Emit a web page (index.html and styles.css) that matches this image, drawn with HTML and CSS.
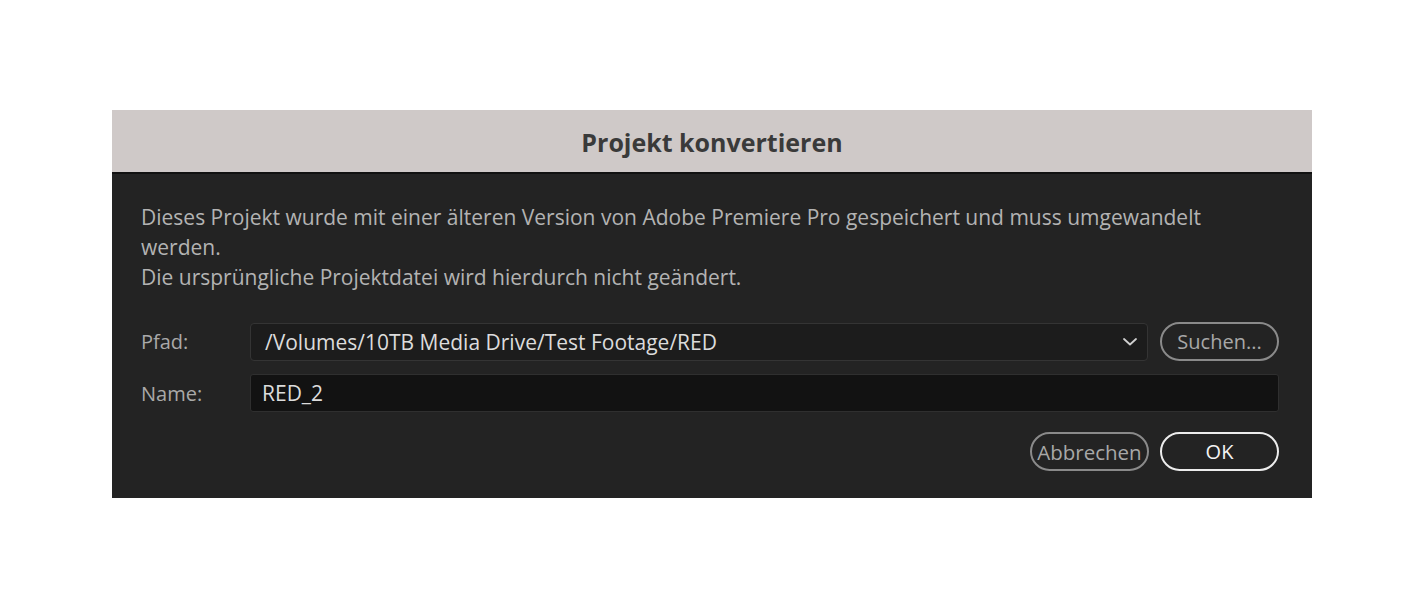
FILE: index.html
```html
<!DOCTYPE html>
<html lang="de">
<head>
<meta charset="utf-8">
<title>Projekt konvertieren</title>
<link rel="stylesheet" href="styles.css">
</head>
<body>
<div class="dialog">
  <div class="titlebar">Projekt konvertieren</div>
  <div class="content">
    <p class="message">Dieses Projekt wurde mit einer älteren Version von Adobe Premiere Pro gespeichert und muss umgewandelt werden.<br>Die ursprüngliche Projektdatei wird hierdurch nicht geändert.</p>
    <div class="form">
      <div class="row">
        <label class="label">Pfad:</label>
        <div class="select">
          <span class="select-text">/Volumes/10TB Media Drive/Test Footage/RED</span>
          <svg class="chevron" width="14" height="8" viewBox="0 0 14 8"><path d="M1 1 L7 6.5 L13 1" fill="none" stroke="#d0d0d0" stroke-width="1.8" stroke-linecap="round" stroke-linejoin="round"/></svg>
        </div>
        <button class="btn btn-secondary">Suchen...</button>
      </div>
      <div class="row">
        <label class="label">Name:</label>
        <div class="input">RED_2</div>
      </div>
    </div>
    <div class="actions">
      <button class="btn btn-secondary btn-wide">Abbrechen</button>
      <button class="btn btn-primary">OK</button>
    </div>
  </div>
</div>
</body>
</html>
```
FILE: styles.css
```css
* { box-sizing: border-box; }
html, body { margin: 0; background: #ffffff; }
body {
  padding: 110px 0 0 112px;
  font-family: "Open Sans", "Noto Sans", sans-serif;
}
.dialog {
  width: 1200px;
  background: #232323;
}
.titlebar {
  height: 64px;
  background: #cfc9c8;
  border-bottom: 2px solid #111111;
  display: flex;
  align-items: center;
  justify-content: center;
  font-weight: 700;
  font-size: 25px;
  color: #3a3a3a;
  padding-top: 2px;
}
.content {
  padding: 28px 33px 27px 29px;
}
.message {
  margin: 0;
  width: 1100px;
  font-size: 21px;
  line-height: 30px;
  color: #b3b3b3;
}
.form {
  margin-top: 30px;
  display: flex;
  flex-direction: column;
  gap: 13px;
}
.row {
  display: flex;
  align-items: center;
  gap: 12px;
}
.label {
  width: 97px;
  font-size: 20px;
  color: #a9a9a9;
}
.select {
  flex: 1;
  height: 38px;
  background: #1c1c1c;
  border: 1px solid #343434;
  border-radius: 4px;
  display: flex;
  align-items: center;
  justify-content: space-between;
  padding: 0 10px 0 14px;
}
.select-text, .input {
  font-size: 21px;
  color: #dcdcdc;
}
.chevron { display: block; }
.input {
  flex: 1;
  height: 38px;
  background: #121212;
  border: 1px solid #2f2f2f;
  border-radius: 3px;
  display: flex;
  align-items: center;
  padding: 0 11px;
}
.btn {
  width: 119px;
  height: 39px;
  border-radius: 20px;
  background: transparent;
  font-family: inherit;
  font-size: 20px;
  padding: 0;
  display: flex;
  align-items: center;
  justify-content: center;
}
.btn-wide { font-size: 20.5px; }
.btn-secondary {
  border: 2px solid #8a8a8a;
  color: #a8a8a8;
}
.btn-primary {
  border: 2px solid #ececec;
  color: #f4f4f4;
}
.actions {
  margin-top: 20px;
  display: flex;
  justify-content: flex-end;
  gap: 11px;
}
```
